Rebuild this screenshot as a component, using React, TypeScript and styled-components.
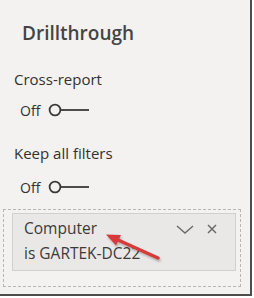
import React from "react";
import styled, { createGlobalStyle } from "styled-components";

const GlobalStyle = createGlobalStyle`
  body {
    margin: 0;
    background: #ffffff;
    font-family: "Open Sans", "Noto Sans", sans-serif;
  }
`;

const Pane = styled.div`
  position: relative;
  box-sizing: border-box;
  width: 252px;
  height: 296px;
  background: #f3f2f1;
  border-right: 2px solid #4d4d4d;
  border-bottom: 2px solid #4d4d4d;
  display: flex;
  flex-direction: column;
`;

const Title = styled.div`
  margin: 21px 0 0 22px;
  font-size: 19px;
  font-weight: 600;
  line-height: 24px;
  color: #454443;
`;

const Label = styled.div<{ top: number }>`
  margin: ${(p) => p.top}px 0 0 14px;
  font-size: 15px;
  line-height: 20px;
  color: #323130;
`;

const ToggleRow = styled.div<{ top: number }>`
  margin: ${(p) => p.top}px 0 0 20px;
  display: flex;
  align-items: center;
  gap: 8px;
  height: 20px;
  font-size: 14px;
  color: #323130;
`;

const DropWell = styled.div`
  margin: 12px 0 0 3px;
  width: 238px;
  box-sizing: border-box;
  border: 1px dashed #b9b7b5;
  padding: 3px 4px 15px 8px;
`;

const FilterCard = styled.div`
  position: relative;
  box-sizing: border-box;
  height: 58px;
  background: #e9e8e7;
  border: 1px solid #d2d0ce;
  padding: 2px 18px 0 11px;
  display: flex;
  justify-content: space-between;
  align-items: flex-start;
`;

const FilterText = styled.div`
  font-size: 15.5px;
  line-height: 25px;
  color: #3b3a39;
`;

const Actions = styled.div`
  display: flex;
  align-items: center;
  gap: 13px;
  margin-top: 8px;
`;

const Arrow = styled.svg`
  position: absolute;
  left: 90px;
  top: 12px;
  filter: drop-shadow(1px 2px 1px rgba(0, 0, 0, 0.25));
`;

const Toggle = () => (
  <svg width="42" height="14" viewBox="0 0 42 14">
    <circle cx="7" cy="7" r="5.4" fill="none" stroke="#3a3938" strokeWidth="1.8" />
    <line x1="12.8" y1="7" x2="41" y2="7" stroke="#3a3938" strokeWidth="1.8" />
  </svg>
);

const App = () => (
  <>
    <GlobalStyle />
    <Pane>
      <Title>Drillthrough</Title>
      <Label top={24}>Cross-report</Label>
      <ToggleRow top={11}>
        <span>Off</span>
        <Toggle />
      </ToggleRow>
      <Label top={23}>Keep all filters</Label>
      <ToggleRow top={14}>
        <span>Off</span>
        <Toggle />
      </ToggleRow>
      <DropWell>
        <FilterCard>
          <FilterText>
            Computer
            <br />
            is GARTEK-DC22
          </FilterText>
          <Actions>
            <svg width="18" height="9" viewBox="0 0 18 9">
              <polyline points="1,1 9,8 17,1" fill="none" stroke="#6b6a69" strokeWidth="1.4" />
            </svg>
            <svg width="10" height="10" viewBox="0 0 10 10">
              <path d="M1 1 L9 9 M9 1 L1 9" stroke="#6b6a69" strokeWidth="1.5" />
            </svg>
          </Actions>
          <Arrow width="60" height="40" viewBox="0 0 60 40">
            <line x1="55" y1="32" x2="14" y2="13.5" stroke="#d8393b" strokeWidth="3.4" strokeLinecap="round" />
            <polygon points="3,8.5 18,9 13,19.5" fill="#d8393b" />
          </Arrow>
        </FilterCard>
      </DropWell>
    </Pane>
  </>
);

export default App;
